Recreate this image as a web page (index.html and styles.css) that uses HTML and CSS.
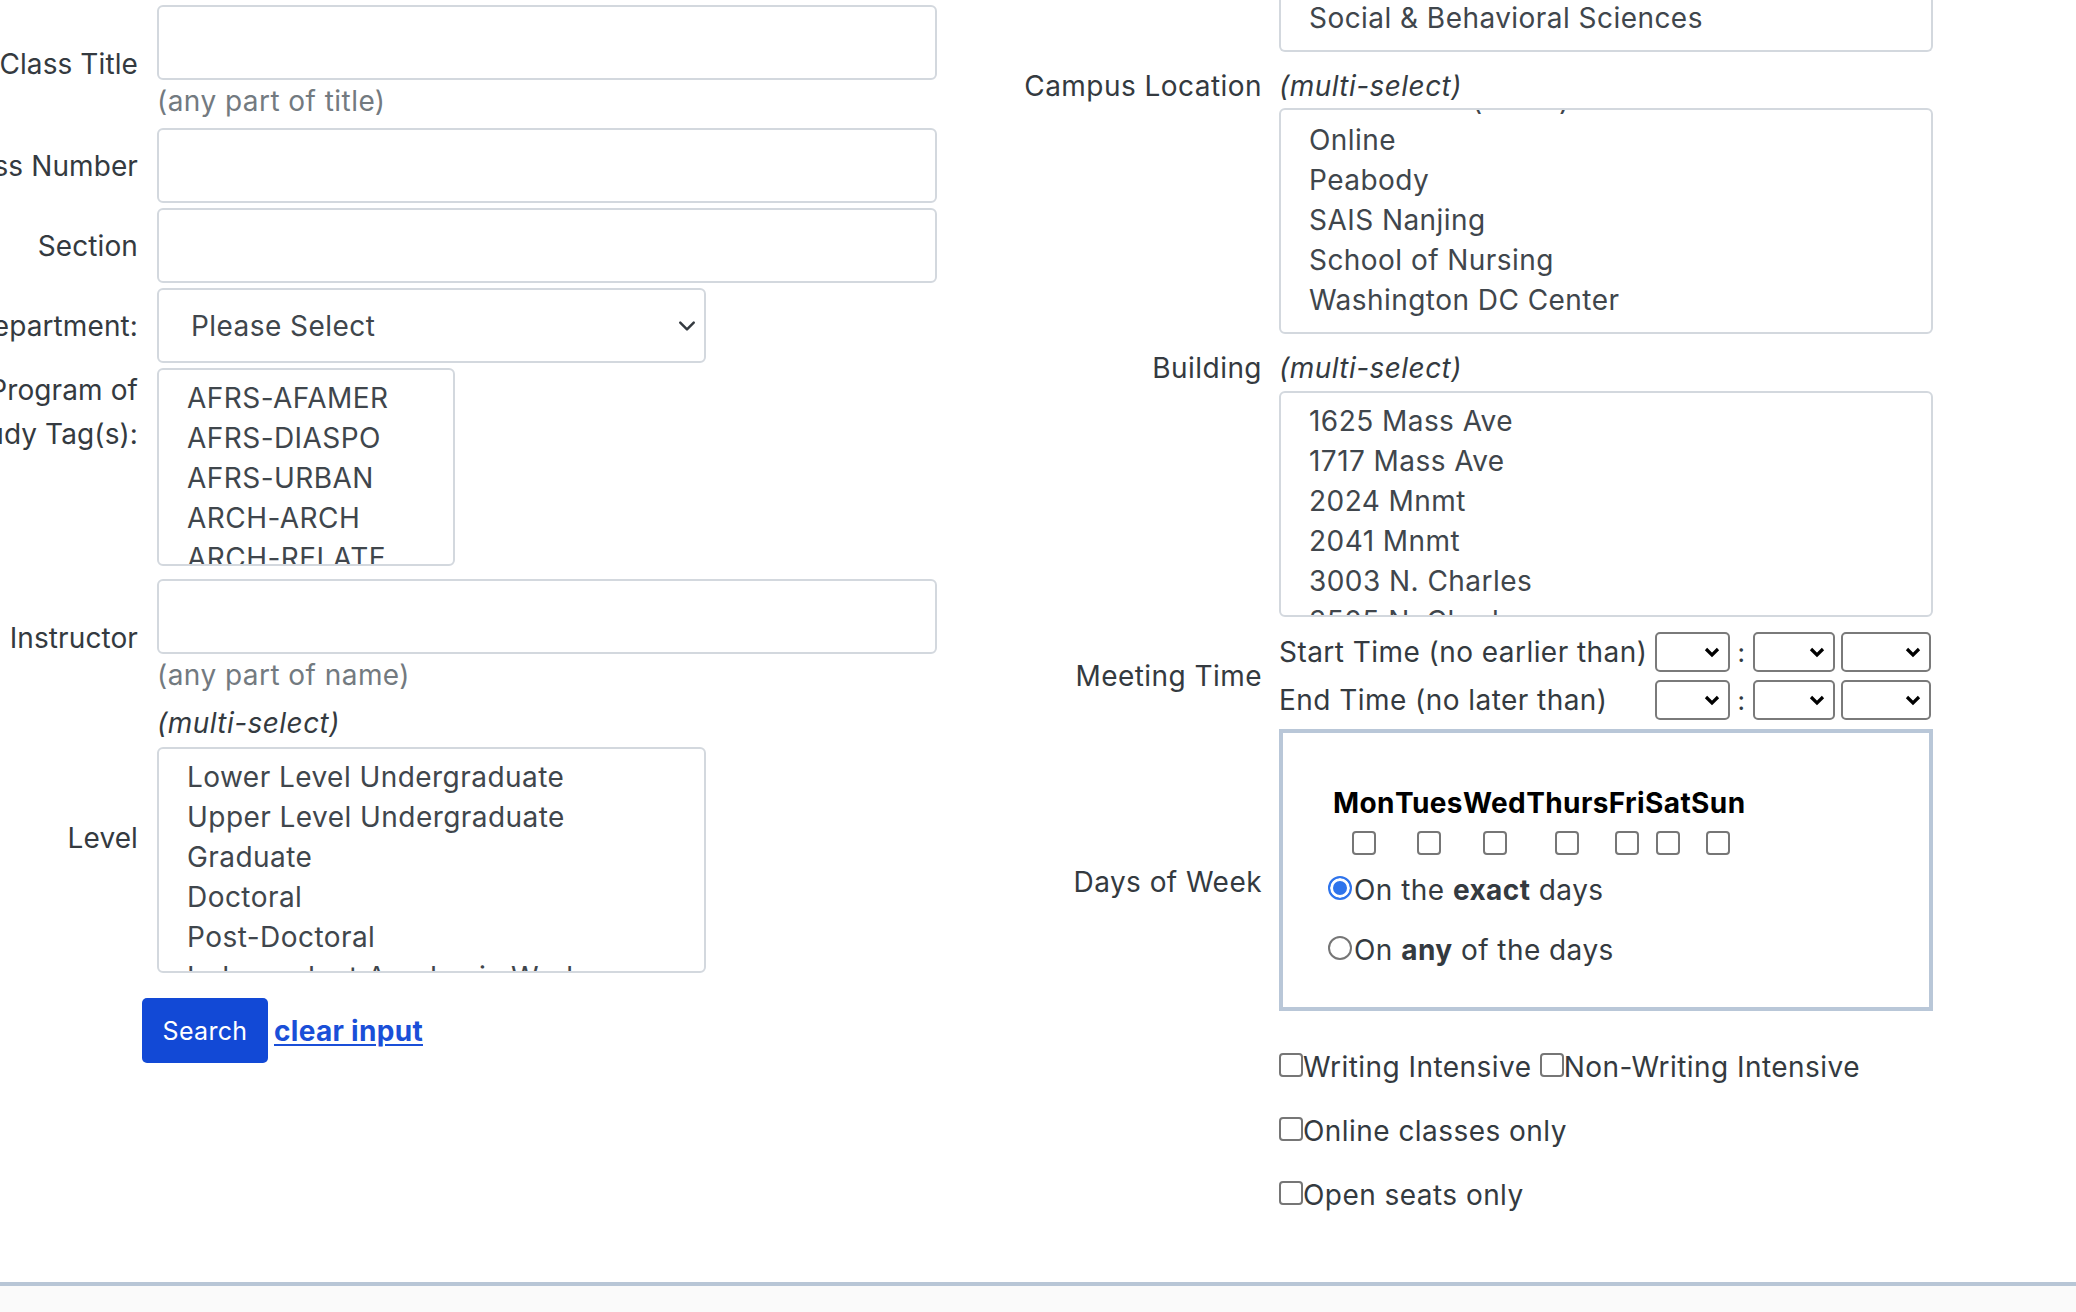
FILE: index.html
```html
<!DOCTYPE html>
<html lang="en">
<head>
<meta charset="utf-8">
<title>Class Search</title>
<link rel="stylesheet" href="styles.css">
</head>
<body>
<main class="page">
  <form class="cols">
    <div class="col col-left">
      <div class="field">
        <label class="lab"><span>Class Title</span></label>
        <div class="ctl">
          <input type="text" class="fc">
          <div class="help">(any part of title)</div>
        </div>
      </div>
      <div class="field">
        <label class="lab"><span>Class Number</span></label>
        <div class="ctl"><input type="text" class="fc"></div>
      </div>
      <div class="field">
        <label class="lab"><span>Section</span></label>
        <div class="ctl"><input type="text" class="fc"></div>
      </div>
      <div class="field">
        <label class="lab"><span>Department:</span></label>
        <div class="ctl">
          <div class="sel"><span>Please Select</span>
            <svg class="chev" width="18" height="18" viewBox="0 0 16 16"><path d="M2 5l6 6 6-6" fill="none" stroke="#343a40" stroke-width="2.2" stroke-linecap="round" stroke-linejoin="round"/></svg>
          </div>
        </div>
      </div>
      <div class="field f-top f-program">
        <label class="lab lab-wrap"><span>Program of Study Tag(s):</span></label>
        <div class="ctl">
          <div class="lb lb-program">
            <div class="opt">AFRS-AFAMER</div>
            <div class="opt">AFRS-DIASPO</div>
            <div class="opt">AFRS-URBAN</div>
            <div class="opt">ARCH-ARCH</div>
            <div class="opt">ARCH-RELATE</div>
          </div>
        </div>
      </div>
      <div class="field">
        <label class="lab"><span>Instructor</span></label>
        <div class="ctl">
          <input type="text" class="fc">
          <div class="help">(any part of name)</div>
        </div>
      </div>
      <div class="field">
        <label class="lab"><span>Level</span></label>
        <div class="ctl">
          <div class="note">(multi-select)</div>
          <div class="lb lb-level">
            <div class="opt">Lower Level Undergraduate</div>
            <div class="opt">Upper Level Undergraduate</div>
            <div class="opt">Graduate</div>
            <div class="opt">Doctoral</div>
            <div class="opt">Post-Doctoral</div>
            <div class="opt">Independent Academic Work</div>
          </div>
        </div>
      </div>
      <div class="actions">
        <button type="button" class="btn">Search</button>
        <a href="#" class="clear">clear input</a>
      </div>
    </div>

    <div class="col col-right">
      <div class="field r-top">
        <div class="lab"></div>
        <div class="ctl">
          <div class="lb lb-school">
            <div class="opt">Social &amp; Behavioral Sciences</div>
          </div>
        </div>
      </div>
      <div class="field f-top r-campus">
        <label class="lab"><span>Campus Location</span></label>
        <div class="ctl">
          <div class="note">(multi-select)</div>
          <div class="lb lb-wide lb-bottom">
            <div class="opt">Homewood (Other)</div>
            <div class="opt">Online</div>
            <div class="opt">Peabody</div>
            <div class="opt">SAIS Nanjing</div>
            <div class="opt">School of Nursing</div>
            <div class="opt">Washington DC Center</div>
          </div>
        </div>
      </div>
      <div class="field f-top r-building">
        <label class="lab"><span>Building</span></label>
        <div class="ctl">
          <div class="note">(multi-select)</div>
          <div class="lb lb-wide lb-build">
            <div class="opt">1625 Mass Ave</div>
            <div class="opt">1717 Mass Ave</div>
            <div class="opt">2024 Mnmt</div>
            <div class="opt">2041 Mnmt</div>
            <div class="opt">3003 N. Charles</div>
            <div class="opt">3505 N. Charles</div>
          </div>
        </div>
      </div>
      <div class="field r-time">
        <label class="lab"><span>Meeting Time</span></label>
        <div class="ctl time">
          <span class="tl">Start Time (no earlier than)</span>
          <div class="ts ts-1"><svg width="16" height="11" viewBox="0 0 16 11"><path d="M2 2l6 6 6-6" fill="none" stroke="#000" stroke-width="3.2"/></svg></div>
          <span class="colon">:</span>
          <div class="ts ts-2"><svg width="16" height="11" viewBox="0 0 16 11"><path d="M2 2l6 6 6-6" fill="none" stroke="#000" stroke-width="3.2"/></svg></div>
          <div class="ts ts-3"><svg width="16" height="11" viewBox="0 0 16 11"><path d="M2 2l6 6 6-6" fill="none" stroke="#000" stroke-width="3.2"/></svg></div>
          <span class="tl">End Time (no later than)</span>
          <div class="ts ts-1"><svg width="16" height="11" viewBox="0 0 16 11"><path d="M2 2l6 6 6-6" fill="none" stroke="#000" stroke-width="3.2"/></svg></div>
          <span class="colon">:</span>
          <div class="ts ts-2"><svg width="16" height="11" viewBox="0 0 16 11"><path d="M2 2l6 6 6-6" fill="none" stroke="#000" stroke-width="3.2"/></svg></div>
          <div class="ts ts-3"><svg width="16" height="11" viewBox="0 0 16 11"><path d="M2 2l6 6 6-6" fill="none" stroke="#000" stroke-width="3.2"/></svg></div>
        </div>
      </div>
      <div class="field r-days">
        <label class="lab"><span>Days of Week</span></label>
        <div class="ctl">
          <div class="days">
            <table class="wk">
              <tr><th>Mon</th><th>Tues</th><th>Wed</th><th>Thurs</th><th>Fri</th><th>Sat</th><th>Sun</th></tr>
              <tr>
                <td><input type="checkbox" class="cb"></td>
                <td><input type="checkbox" class="cb"></td>
                <td><input type="checkbox" class="cb"></td>
                <td><input type="checkbox" class="cb"></td>
                <td><input type="checkbox" class="cb"></td>
                <td><input type="checkbox" class="cb"></td>
                <td><input type="checkbox" class="cb"></td>
              </tr>
            </table>
            <div class="rrow rrow-first"><label><input type="radio" name="dm" class="rd" checked>On the <b>exact</b> days</label></div>
            <div class="rrow"><label><input type="radio" name="dm" class="rd">On <b>any</b> of the days</label></div>
          </div>
        </div>
      </div>
      <div class="field">
        <div class="lab"></div>
        <div class="ctl">
          <div class="crow"><label><input type="checkbox" class="cb">Writing Intensive</label> <label><input type="checkbox" class="cb">Non-Writing Intensive</label></div>
          <div class="crow"><label><input type="checkbox" class="cb">Online classes only</label></div>
          <div class="crow"><label><input type="checkbox" class="cb">Open seats only</label></div>
        </div>
      </div>
    </div>
  </form>
  <footer class="foot"></footer>
</main>
</body>
</html>
```

FILE: styles.css
```css
* { box-sizing: border-box; }

body {
  margin: 0;
  font-family: Inter, "Open Sans", "Noto Sans", sans-serif;
  font-size: 28px;
  letter-spacing: 0.45px;
  color: #343a40;
  background: #fff;
  overflow: hidden;
}

.cols {
  display: flex;
  align-items: flex-start;
  gap: 63px;
  margin: 0;
}

.col { display: flex; flex-direction: column; }

.col-left { width: 937px; padding-top: 5px; gap: 5px; }
.col-right { width: 950px; }

.field { display: flex; align-items: center; gap: 19px; }
.col-right .field { gap: 17px; }
.f-top { align-items: flex-start; }

.lab {
  width: 138px;
  flex: none;
  display: flex;
  justify-content: flex-end;
}
.col-right .lab { width: 262px; }
.lab span {
  flex: none;
  white-space: nowrap;
  text-align: right;
  line-height: 44px;
}
.col-left .lab span { letter-spacing: 0.1px; }
.lab-wrap span { white-space: normal; width: 210px; }

.ctl { flex: none; }

.fc {
  display: block;
  width: 780px;
  height: 75px;
  border: 2px solid #d3d8de;
  border-radius: 6px;
  background: #fff;
  font: inherit;
  padding: 0 28px;
}

.help { height: 43px; line-height: 43px; color: #737a80; }

.note { height: 43px; line-height: 43px; font-style: italic; color: #343a40; }
.col-right .note { height: 44px; line-height: 44px; }

.sel {
  width: 549px;
  height: 75px;
  border: 2px solid #d3d8de;
  border-radius: 6px;
  display: flex;
  align-items: center;
  justify-content: space-between;
  padding: 0 8px 0 32px;
  color: #40464c;
}

.lb {
  border: 2px solid #d3d8de;
  border-radius: 6px;
  overflow: hidden;
  display: flex;
  flex-direction: column;
  padding: 8px 0 0 28px;
  color: #40464c;
}
.lb .opt { flex: none; height: 40px; line-height: 40px; white-space: nowrap; }

.lb-program { width: 298px; height: 198px; }
.f-program { margin-bottom: 8px; }
.lb-level { width: 549px; height: 226px; margin-top: 2px; }

.lb-wide { width: 654px; height: 226px; }
.lb-bottom { justify-content: flex-end; padding: 0 0 12px 28px; }
.lb-build { margin-top: 1px; }

.lb-school {
  width: 654px;
  height: 52px;
  border-top: none;
  border-radius: 0 0 6px 6px;
  justify-content: flex-end;
  padding: 0 0 12px 28px;
}

.actions {
  display: flex;
  align-items: center;
  gap: 6px;
  padding-left: 142px;
  margin-top: 20px;
}

.btn {
  width: 126px;
  height: 65px;
  border: none;
  border-radius: 5px;
  background: #1249d6;
  color: #fff;
  font-family: inherit;
  font-size: 25px;
  letter-spacing: 0.3px;
  padding: 0;
}

.clear {
  color: #1a4fd8;
  font-weight: 700;
  font-size: 28px;
  letter-spacing: 0.3px;
  text-decoration: underline;
  text-underline-offset: 3px;
}

.r-top { height: 52px; }
.r-campus { margin-top: 12px; }
.r-building { margin-top: 12px; }
.r-time { margin-top: 15px; }
.r-days { margin-top: 9px; }

.time {
  display: grid;
  grid-template-columns: 376px 75px 23px 82px 96px;
  row-gap: 8px;
  align-items: center;
}
.tl { white-space: nowrap; }
.colon { text-align: center; font-size: 26px; }
.ts {
  height: 40px;
  border: 2px solid #7a7a7a;
  border-radius: 5px;
  display: flex;
  align-items: center;
  justify-content: flex-end;
  padding-right: 8px;
  background: #fff;
}
.ts-1 { width: 75px; }
.ts-2 { width: 82px; }
.ts-3 { width: 90px; justify-self: end; }

.days {
  width: 654px;
  height: 282px;
  border: 4px solid #b9c7d8;
  padding: 52px 0 0 45px;
  margin-bottom: 24px;
}

.wk { border-collapse: collapse; border-spacing: 0; margin-left: 5px; }
.wk th {
  padding: 0;
  height: 36px;
  line-height: 36px;
  font-weight: 700;
  font-size: 28px;
  letter-spacing: 0.4px;
  color: #000;
}
.wk td { padding: 10px 0 0; height: 36px; text-align: center; vertical-align: top; }
.wk td .cb { display: block; margin: 0 auto; }

.cb {
  -webkit-appearance: none;
  appearance: none;
  width: 24px;
  height: 24px;
  border: 2px solid #767676;
  border-radius: 4px;
  background: #fff;
  margin: 0;
  vertical-align: baseline;
}

.rd {
  -webkit-appearance: none;
  appearance: none;
  width: 24px;
  height: 24px;
  border: 2px solid #767676;
  border-radius: 50%;
  background: #fff;
  margin: 0 2px 0 0;
  vertical-align: baseline;
}
.rd:checked {
  border-color: #2f74ec;
  background: #2f74ec;
  box-shadow: inset 0 0 0 3px #fff;
}

.rrow { height: 60px; line-height: 60px; white-space: nowrap; }
.rrow-first { margin-top: 3px; }
.rrow b { font-weight: 700; }

.crow { height: 64px; line-height: 64px; white-space: nowrap; }

.foot {
  margin-top: 55px;
  height: 100px;
  border-top: 4px solid #b8c6d6;
  background: #fafafa;
}
```
